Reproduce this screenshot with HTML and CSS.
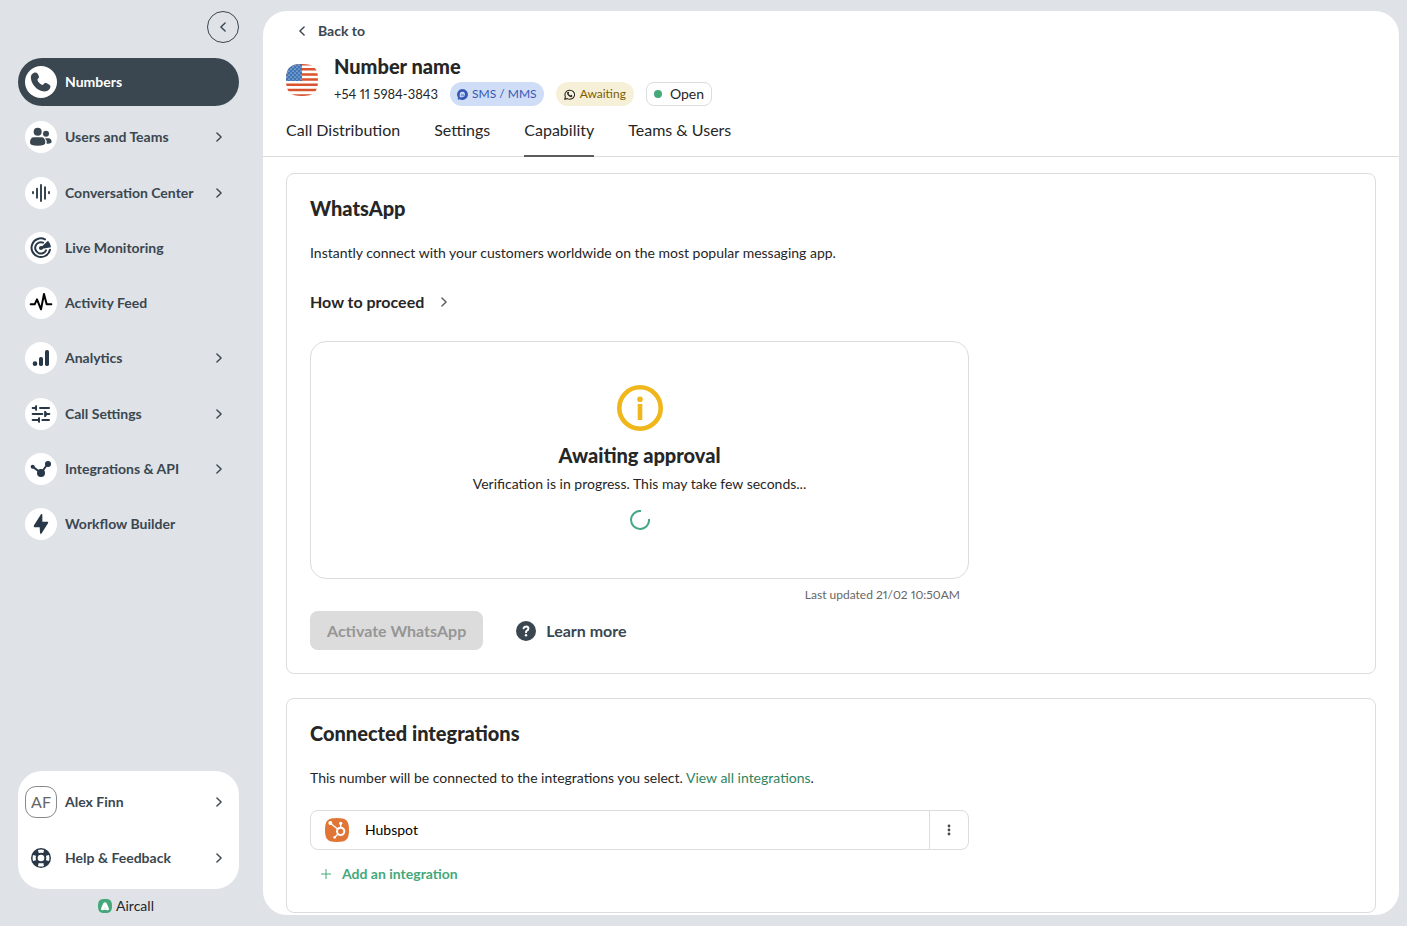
FILE: index.html
```html
<!DOCTYPE html>
<html lang="en">
<head>
<meta charset="utf-8">
<meta name="viewport" content="width=device-width, initial-scale=1">
<title>Number name</title>
<link rel="stylesheet" href="styles.css">
</head>
<body>
<svg class="defs" aria-hidden="true">
  <symbol id="chev" viewBox="0 0 12 12"><path d="M3.9 1.9 8.1 6 3.9 10.1" fill="none" stroke="currentColor" stroke-width="1.4" stroke-linecap="round" stroke-linejoin="round"/></symbol>
</svg>
<div class="app">
  <aside class="sidebar">
    <button class="collapse" aria-label="Collapse menu"><svg class="chev flip"><use href="#chev"/></svg></button>
    <nav>
      <ul class="menu">
        <li><a class="item active" href="#"><svg class="badge" viewBox="0 0 96 96"><path d="M22 24C26 19 33 18 37 22L41 29C43 33 42 36 38 39C35 44 46 57 54 57C57 51 60 50 64 51L73 56C77 59 77 63 75 67C71 75 62 77 54 76C36 73 20 55 18 38C17 32 18 27 22 24Z"/></svg>Numbers</a></li>
        <li><a class="item" href="#"><svg class="badge" viewBox="0 0 96 96"><circle cx="38" cy="32" r="12"/><circle cx="63" cy="38" r="9"/><path d="M25 49H51Q61 51 61 65Q61 74 38 74Q15 74 15 65Q15 51 25 49ZM60 52H72Q80 54 80 64Q78 69 65 68Q66 58 60 52Z"/></svg>Users and Teams<svg class="chev"><use href="#chev"/></svg></a></li>
        <li><a class="item" href="#"><svg class="badge" viewBox="0 0 96 96"><path class="line" stroke-width="6" d="M24 45V49M36 35V62M48 24V72M60 31V65M72 45V49"/></svg>Conversation Center<svg class="chev"><use href="#chev"/></svg></a></li>
        <li><a class="item" href="#"><svg class="badge navy" viewBox="0 0 96 96"><path class="line" stroke-width="6" d="M60 22A28 28 0 1 0 75 53M54 32A17 17 0 1 0 63 55"/><circle cx="48" cy="48" r="6"/><path d="M48 46L69 26Q77 35 78 46L48 51Z"/></svg>Live Monitoring</a></li>
        <li><a class="item" href="#"><svg class="badge black" viewBox="0 0 96 96"><path class="line" stroke-width="6" d="M17 52H29L36 37L48 67L57 21L65 52H79"/></svg>Activity Feed</a></li>
        <li><a class="item" href="#"><svg class="badge navy" viewBox="0 0 96 96"><circle cx="30" cy="65" r="7"/><rect x="42" y="45" width="12" height="27" rx="5"/><rect x="60" y="24" width="12" height="48" rx="5"/></svg>Analytics<svg class="chev"><use href="#chev"/></svg></a></li>
        <li><a class="item" href="#"><svg class="badge navy" viewBox="0 0 96 96"><path class="line" stroke-width="6" d="M23 30H31M45 30H72M23 48H52M66 48H73M23 66H38M52 66H72"/><path d="M36 22V38L27 30ZM58 38L71 48L58 58ZM45 58V74L36 66Z"/><path class="line" stroke-width="6" d="M33 25V35M61 42V54M42 61V71"/></svg>Call Settings<svg class="chev"><use href="#chev"/></svg></a></li>
        <li><a class="item" href="#"><svg class="badge navy" viewBox="0 0 96 96"><path class="line" stroke-width="6" d="M23 41L48 60L68 33"/><circle cx="23" cy="41" r="6"/><circle cx="69" cy="33" r="9"/><circle cx="48" cy="60" r="12"/></svg>Integrations &amp; API<svg class="chev"><use href="#chev"/></svg></a></li>
        <li><a class="item" href="#"><svg class="badge navy" viewBox="0 0 96 96"><path d="M48 19Q52 16 52 21V41H68Q71 42 69 46L50 76Q46 80 45 74L44 58H28Q25 56 27 52Z"/></svg>Workflow Builder</a></li>
      </ul>
    </nav>
    <div class="account">
      <a class="item" href="#"><span class="avatar">AF</span>Alex Finn<svg class="chev"><use href="#chev"/></svg></a>
      <a class="item" href="#"><svg class="badge navy" viewBox="0 0 96 96"><circle cx="48" cy="48" r="30"/><path class="cut" d="M39 24Q48 21 57 24L55 33Q48 31 41 33ZM39 72Q48 75 57 72L55 63Q48 65 41 63ZM24 39Q21 48 24 57L33 55Q31 48 33 41ZM72 39Q75 48 72 57L63 55Q65 48 63 41Z"/><circle class="cut" cx="48" cy="48" r="10"/></svg>Help &amp; Feedback<svg class="chev"><use href="#chev"/></svg></a>
    </div>
    <div class="brand">
      <svg viewBox="0 0 42 42"><path fill="#45a87b" d="M21 0C37 0 42 5 42 21S37 42 21 42 0 37 0 21 5 0 21 0Z"/><path fill="#fff" d="M17 11Q21 8 25 11Q30 20 33 30Q33 35 26 33Q21 31 16 33Q9 35 9 30Q12 19 17 11Z"/><path fill="none" stroke="#b9dfcc" stroke-width="2" d="M17 28Q21 26 25 28"/></svg>
      Aircall
    </div>
  </aside>

  <main class="panel">
    <header class="top">
      <a class="back" href="#"><svg class="chev flip"><use href="#chev"/></svg>Back to</a>
      <div class="identity">
        <svg class="flag" viewBox="0 0 32 32" role="img" aria-label="United States">
          <defs>
            <clipPath id="round"><path d="M16 0C28 0 32 4 32 16S28 32 16 32 0 28 0 16 4 0 16 0Z"/></clipPath>
            <pattern id="stars" width="4" height="4" patternUnits="userSpaceOnUse"><circle cx="1" cy="1" r=".6" fill="#fff"/><circle cx="3" cy="3" r=".6" fill="#fff"/></pattern>
          </defs>
          <g clip-path="url(#round)">
            <path fill="#fff" d="M0 0H32V32H0Z"/>
            <path stroke="#d9532f" stroke-width="2.5" d="M0 .2H32M0 5.3H32M0 10.4H32M0 15.6H32M0 20.8H32M0 26H32M0 31.4H32"/>
            <path fill="#3f74b5" d="M0 0H16V17H0Z"/><path fill="url(#stars)" d="M0 0H16V17H0Z"/>
          </g>
        </svg>
        <div class="who">
          <h1>Number name</h1>
          <div class="meta">
            <span class="phone">+54 11 5984-3843</span>
            <span class="chip sms"><svg viewBox="0 0 32 32"><path fill="#3558b5" d="M16 0A16 16 0 1 1 8 30L2 31L3 25A16 16 0 0 1 16 0Z"/><path fill="#d0ddf6" d="M16 8A8 8 0 1 1 14 24H8V16A8 8 0 0 1 16 8Z"/><path fill="#7f9bdb" d="M11 15L14 13L17 16L19 13L21 16V21H11Z"/></svg>SMS / MMS</span>
            <span class="chip wait"><svg viewBox="0 0 32 32"><path fill="none" stroke="#222" stroke-width="3" stroke-linejoin="round" d="M2 30L4 22A14 13 0 1 1 10 28Z"/><path fill="#222" d="M10 9Q12 7 14 9L15 12L13 14Q15 18 19 19L21 17L24 19Q25 22 21 24Q15 24 10 17Q8 12 10 9Z"/></svg>Awaiting</span>
            <span class="chip open"><i class="dot"></i>Open</span>
          </div>
        </div>
      </div>
      <nav class="tabs">
        <a href="#">Call Distribution</a>
        <a href="#">Settings</a>
        <a href="#" class="current" aria-current="page">Capability</a>
        <a href="#">Teams &amp; Users</a>
      </nav>
    </header>

    <div class="cards">
      <section class="card">
        <h2>WhatsApp</h2>
        <p class="intro">Instantly connect with your customers worldwide on the most popular messaging app.</p>
        <button class="how">How to proceed<svg class="chev"><use href="#chev"/></svg></button>
        <div class="column">
          <div class="status">
            <svg class="info" viewBox="0 0 46 46"><circle cx="23" cy="23" r="20.7" fill="none" stroke="#efb71c" stroke-width="4.6"/><circle cx="23" cy="14.3" r="2.8" fill="#efb71c"/><path fill="#efb71c" d="M20.7 19H25.3V35H20.7Z"/></svg>
            <h3>Awaiting approval</h3>
            <p>Verification is in progress. This may take few seconds...</p>
            <svg class="spinner" viewBox="0 0 20 20"><path fill="none" stroke="#45a884" stroke-width="2" d="M11 1A9 9 0 1 0 19 9"/></svg>
          </div>
          <p class="updated">Last updated 21/02 10:50AM</p>
        </div>
        <div class="actions">
          <button class="activate" disabled>Activate WhatsApp</button>
          <a class="learn" href="#"><svg viewBox="0 0 20 20"><circle cx="10" cy="10" r="10" fill="#3a4750"/><path fill="none" stroke="#fff" stroke-width="2" stroke-linecap="round" stroke-linejoin="round" d="M7.6 7.3Q8 5.5 10 5.5Q12.5 5.6 12.4 7.7Q12.3 9 10.9 9.6Q10 10 10 11.2"/><circle cx="10" cy="14.2" r="1.2" fill="#fff"/></svg>Learn more</a>
        </div>
      </section>

      <section class="card second">
        <h2>Connected integrations</h2>
        <p class="intro">This number will be connected to the integrations you select. <a href="#">View all integrations</a>.</p>
        <div class="column integration">
          <svg class="hub" viewBox="0 0 72 72"><path fill="#e07535" d="M36 0C64 0 72 8 72 36S64 72 36 72 0 64 0 36 8 0 36 0Z"/><g fill="none" stroke="#fff"><circle cx="47" cy="40" r="11" stroke-width="6"/><path stroke-width="4" d="M16 16L38 33M47 17V29M39 48L30 57"/></g><g fill="#fff"><circle cx="16" cy="15" r="6"/><circle cx="47" cy="16" r="5"/><circle cx="29" cy="58" r="4"/></g></svg>
          <span>Hubspot</span>
          <button class="more" aria-label="More options"><svg viewBox="0 0 4 12"><circle cx="2" cy="2" r="1.4"/><circle cx="2" cy="6" r="1.4"/><circle cx="2" cy="10" r="1.4"/></svg></button>
        </div>
        <button class="add"><svg viewBox="0 0 10 10"><path stroke="currentColor" d="M5 0V10M0 5H10"/></svg>Add an integration</button>
      </section>
    </div>
  </main>
</div>
</body>
</html>
```
FILE: styles.css
```css
* { box-sizing: border-box; }
body {
  margin: 0;
  background: #dfe2e7;
  color: #262626;
  font: 14px/20px Lato, "Open Sans", sans-serif;
  font-variant-numeric: proportional-nums;
}
h1, h2, h3, p, ul { margin: 0; padding: 0; }
ul { list-style: none; }
a { color: inherit; text-decoration: none; }
button { font: inherit; color: inherit; background: none; border: 0; padding: 0; cursor: pointer; }
svg { display: block; flex: none; }
.defs { position: absolute; width: 0; height: 0; }
.chev { width: 12px; height: 12px; }
.flip { transform: scaleX(-1); }

.app { display: flex; min-height: 100vh; }

.sidebar {
  flex: none;
  width: 263px;
  padding: 11px 24px 10px 18px;
  display: flex;
  flex-direction: column;
  color: #3a4750;
}
.collapse {
  align-self: flex-end;
  width: 32px;
  height: 32px;
  display: grid;
  place-items: center;
  border: 1px solid #3a4750;
  border-radius: 50%;
}
.menu {
  margin-top: 15px;
  height: 490px;
  display: flex;
  flex-direction: column;
  justify-content: space-between;
}
.item {
  display: flex;
  align-items: center;
  gap: 8px;
  height: 48px;
  padding: 0 14px 0 7px;
  border-radius: 24px;
  font-weight: 700;
}
.item .chev { margin-left: auto; }
.active { background: #3a4750; color: #fff; }
.badge { width: 32px; height: 32px; border-radius: 50%; background: #fff; fill: #3a4750; stroke: #3a4750; stroke-width: 0; }
.badge.navy { fill: #283848; stroke: #283848; }
.badge.black { stroke: #000; }
.badge .line { fill: none; stroke-linecap: round; stroke-linejoin: round; }
.badge .cut { fill: #fff; }
.account {
  margin-top: auto;
  padding: 7px 0;
  display: grid;
  gap: 8px;
  background: #fff;
  border-radius: 24px;
}
.avatar {
  width: 32px;
  height: 32px;
  display: grid;
  place-items: center;
  border: 1px solid #8a8a8a;
  border-radius: 11px;
  color: #666;
  font-size: 16px;
  font-weight: 400;
}
.brand {
  margin-top: 7px;
  display: flex;
  align-items: center;
  justify-content: center;
  gap: 4px;
  color: #262626;
  padding-right: 5px;
}
.brand svg { width: 14px; height: 14px; }

.panel {
  flex: 1;
  min-width: 0;
  margin: 11px 8px 11px 0;
  padding-bottom: 2px;
  background: #fff;
  border-radius: 24px;
}
.top { padding: 10px 23px 0; border-bottom: 1px solid #dcdcdc; }
.back { display: flex; width: fit-content; align-items: center; gap: 10px; margin-left: 10px; color: #3a4750; font-weight: 700; }
.identity { display: flex; gap: 16px; margin-top: 13px; }
.flag { width: 32px; height: 32px; margin-top: 10px; }
h1, h2, h3 { font-size: 20px; line-height: 24px; font-weight: 900; }
.meta { display: flex; align-items: center; gap: 12px; margin-top: 4px; }
.phone { font-size: 13px; }
.chip {
  display: flex;
  align-items: center;
  gap: 5px;
  height: 24px;
  padding: 0 8px;
  border-radius: 12px;
  font-size: 12px;
}
.chip svg { width: 11px; height: 11px; }
.sms { gap: 4px; padding: 0 7px; background: #d0ddf6; color: #3558b5; }
.wait { background: #f7f0d8; color: #7d5c00; }
.open { border: 1px solid #dcdcdc; border-radius: 8px; font-size: 14px; gap: 8px; padding: 0 7px; }
.dot { width: 8px; height: 8px; border-radius: 50%; background: #45a87b; }
.tabs { display: flex; gap: 34px; margin-top: 12px; font-size: 16px; line-height: 24px; }
.tabs a { padding-bottom: 13px; border-bottom: 2px solid transparent; margin-bottom: -1px; }
.tabs .current { border-bottom-color: #5c5c5c; }

.cards { display: grid; gap: 24px; padding: 16px 23px 0; }
.card { border: 1px solid #dcdcdc; border-radius: 8px; padding: 22px 23px 23px; }
.card.second { padding-bottom: 28px; }
.intro { margin-top: 23px; }
.intro a { color: #2f8562; }
.how {
  display: flex;
  align-items: center;
  gap: 14px;
  margin: 27px 0;
  font-size: 16px;
  line-height: 24px;
  font-weight: 700;
}
.how .chev { color: #5c5c5c; }
.column { max-width: 659px; }
.status {
  display: flex;
  flex-direction: column;
  align-items: center;
  padding: 43px 16px 48px;
  border: 1px solid #dcdcdc;
  border-radius: 16px;
  text-align: center;
}
.info { width: 46px; height: 46px; }
.status h3 { margin-top: 12px; }
.status p { margin-top: 7px; }
.spinner { width: 20px; height: 20px; margin-top: 16px; }
.updated { margin: 6px 9px; text-align: right; font-size: 12px; color: #666; }
.actions { display: flex; align-items: center; gap: 33px; font-size: 16px; font-weight: 700; }
.activate { height: 39px; padding: 0 17px; border-radius: 8px; background: #dcdcdc; color: #969696; cursor: default; }
.learn { display: flex; align-items: center; gap: 10px; color: #3a4750; }
.learn svg { width: 20px; height: 20px; }
.integration {
  display: flex;
  align-items: center;
  gap: 16px;
  height: 40px;
  margin-top: 22px;
  padding-left: 14px;
  border: 1px solid #dcdcdc;
  border-radius: 8px;
  color: #000;
}
.hub { width: 24px; height: 24px; }
.more {
  align-self: stretch;
  margin-left: auto;
  width: 39px;
  display: grid;
  place-items: center;
  border-left: 1px solid #dcdcdc;
}
.more svg { width: 4px; height: 12px; fill: #4a4a4a; }
.add { display: flex; align-items: center; gap: 11px; margin: 14px 0 0 11px; color: #45a87b; font-weight: 700; }
.add svg { width: 10px; height: 10px; }
```
